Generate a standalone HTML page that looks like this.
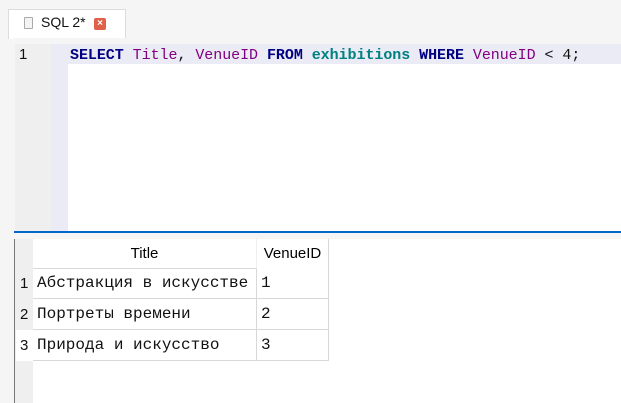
<!DOCTYPE html>
<html><head><meta charset="utf-8"><style>
*{margin:0;padding:0;box-sizing:border-box}
body{width:621px;height:403px;background:#f5f5f5;position:relative;overflow:hidden;font-family:"Liberation Sans",sans-serif}
.abs{position:absolute}
.code{font-family:"Liberation Mono",monospace;font-size:15px;font-weight:bold;white-space:pre;letter-spacing:-0.05px}
.cell{position:absolute;border-right:1px solid #d8d8d8;border-bottom:1px solid #d8d8d8;background:#fff}
.mono{font-family:"Liberation Mono",monospace;font-size:16px;color:#111;white-space:pre}
</style></head><body>
<div class="abs" style="left:8px;top:9px;width:118px;height:30px;background:#fff;border:1px solid #dcdcdc;border-bottom:none"></div>
<div class="abs" style="left:24px;top:17px;width:9px;height:12px;border:1px solid #aaa;background:#f4f4f4;border-radius:1px"></div>
<div class="abs" style="left:41px;top:14px;font-size:14px;color:#111">SQL 2*</div>
<div class="abs" style="left:94px;top:18px;width:12px;height:12px;background:#e0604a;border-radius:2px;color:#fff;font-size:10px;line-height:12px;text-align:center;font-weight:bold">×</div>
<div class="abs" style="left:14px;top:38px;width:607px;height:6px;background:#f5f5f5"></div>
<div class="abs" style="left:68px;top:44px;width:553px;height:188px;background:#fff"></div>
<div class="abs" style="left:15px;top:44px;width:37px;height:188px;background:#efefef"></div>
<div class="abs" style="left:51px;top:44px;width:17px;height:188px;background:#ebebf5"></div>
<div class="abs" style="left:68px;top:44px;width:553px;height:20px;background:#ebebf5"></div>
<div class="abs" style="left:19px;top:46px;font-size:15px;color:#111">1</div>
<div class="abs code" style="left:70px;top:47px"><span style="color:#000080">SELECT</span> <span style="color:#800080;font-weight:normal">Title</span><span style="color:#111;font-weight:normal">,</span> <span style="color:#800080;font-weight:normal">VenueID</span> <span style="color:#000080">FROM</span> <span style="color:#008080">exhibitions</span> <span style="color:#000080">WHERE</span> <span style="color:#800080;font-weight:normal">VenueID</span> <span style="color:#111;font-weight:normal">&lt; 4;</span></div>
<div class="abs" style="left:14px;top:231px;width:607px;height:2px;background:#0066cc"></div>
<div class="abs" style="left:14px;top:239px;width:607px;height:164px;background:#fff;border-left:1px solid #777"></div>
<div class="abs" style="left:15px;top:239px;width:18px;height:164px;background:#efefef"></div>
<div class="cell" style="left:33px;top:239px;width:224px;height:30px;border-right-color:#eee;font-size:15px;text-align:center;line-height:30px">Title</div>
<div class="cell" style="left:257px;top:239px;width:72px;height:30px;font-size:15px;text-align:center;line-height:30px;border-bottom:none">VenueID</div>
<div class="cell" style="left:33px;top:269px;width:224px;height:30px"><span class="mono abs" style="left:4px;top:5px">Абстракция в искусстве</span></div>
<div class="cell" style="left:257px;top:269px;width:72px;height:30px"><span class="mono abs" style="left:4px;top:5px">1</span></div>
<div class="cell" style="left:33px;top:299px;width:224px;height:31px"><span class="mono abs" style="left:4px;top:6px">Портреты времени</span></div>
<div class="cell" style="left:257px;top:299px;width:72px;height:31px"><span class="mono abs" style="left:4px;top:6px">2</span></div>
<div class="cell" style="left:33px;top:330px;width:224px;height:31px"><span class="mono abs" style="left:4px;top:6px">Природа и искусство</span></div>
<div class="cell" style="left:257px;top:330px;width:72px;height:31px"><span class="mono abs" style="left:4px;top:6px">3</span></div>
<div class="abs" style="left:16px;top:330px;width:17px;height:31px;background:#fff"></div>
<div class="abs" style="left:20px;top:275px;font-size:15px;color:#111">1</div>
<div class="abs" style="left:20px;top:306px;font-size:15px;color:#111">2</div>
<div class="abs" style="left:20px;top:337px;font-size:15px;color:#111">3</div>
</body></html>
